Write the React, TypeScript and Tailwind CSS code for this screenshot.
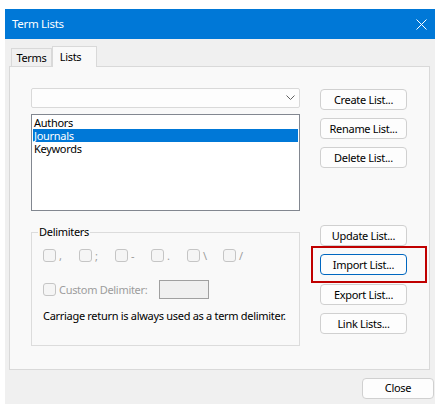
import React from "react";

const font = "font-['Noto_Sans',sans-serif] tracking-[-0.3px]";

function Btn({ label, focused = false, className = "" }: { label: string; focused?: boolean; className?: string }) {
  return (
    <div
      className={`h-[21px] w-[87px] rounded-[4px] border bg-[#fdfdfd] flex items-center justify-center text-[11px] text-black leading-none ${
        focused ? "border-[#0067c0]" : "border-[#d0d0d0]"
      } ${className}`}
    >
      {label}
    </div>
  );
}

function Check({ label, className = "" }: { label?: string; className?: string }) {
  return (
    <div className={`flex items-center ${className}`}>
      <div className="h-[13px] w-[13px] rounded-[3px] border border-[#c5c5c5] bg-[#f5f5f5]" />
      {label !== undefined && <span className="ml-[3px] text-[11px] leading-none text-[#9d9d9d]">{label}</span>}
    </div>
  );
}

export default function App() {
  return (
    <div className={`w-[435px] h-[404px] bg-white pt-[9px] pl-[5px] overflow-hidden ${font}`}>
      <div className="flex h-[395px] w-[430px] flex-col">
        {/* title bar */}
        <div className="flex h-[30px] items-center justify-between bg-[#0078d7] pl-[7px] pr-[8px]">
          <span className="text-[11.5px] text-white">Term Lists</span>
          <svg width="11" height="11" viewBox="0 0 11 11">
            <path d="M0.5 0.5 L10.5 10.5 M10.5 0.5 L0.5 10.5" stroke="white" strokeWidth="1" />
          </svg>
        </div>
        {/* body */}
        <div className="flex flex-1 flex-col bg-[#f0f0f0] pl-[4px]">
          {/* tabs */}
          <div className="mt-[7px] flex items-end pl-[2px]">
            <div className="flex h-[18px] w-[41px] items-center justify-center border border-b-0 border-[#d9d9d9] bg-[#f0f0f0] pt-[2px] text-[11px] text-black">
              Terms
            </div>
            <div className="relative z-10 -mb-[1px] flex h-[21px] w-[45px] items-start justify-center border border-b-0 border-[#d9d9d9] bg-[#f9f9f9] pt-[2px] pr-[8px] text-[11px] text-black">
              Lists
            </div>
          </div>
          {/* panel */}
          <div className="h-[304px] w-[421px] border border-[#d9d9d9] bg-[#f9f9f9] pl-[21px] pt-[21px]">
            {/* row 1 */}
            <div className="flex">
              <div className="w-[269px]">
                <div className="flex h-[20px] items-center justify-end rounded-[2px] border border-[#d9d9d9] bg-[#fdfdfd] pr-[4px]">
                  <svg width="9" height="6" viewBox="0 0 9 6">
                    <path d="M0.5 0.5 L4.5 4.5 L8.5 0.5" stroke="#606060" strokeWidth="1" fill="none" />
                  </svg>
                </div>
                <div className="mt-[6px] h-[97px] border border-[#828790] bg-white p-[1px] text-[11px] leading-[13px] text-black">
                  <div className="h-[13px] pl-[1px]">Authors</div>
                  <div className="h-[13px] bg-[#0078d7] pl-[1px] text-white">Journals</div>
                  <div className="h-[13px] pl-[1px]">Keywords</div>
                </div>
              </div>
              <div className="ml-[20px] mt-[1px] flex flex-col">
                <Btn label="Create List..." />
                <Btn label="Rename List..." className="mt-[8px]" />
                <Btn label="Delete List..." className="mt-[8px]" />
              </div>
            </div>
            {/* row 2 */}
            <div className="mt-[14px] flex">
              <fieldset className="h-[121px] w-[269px] border border-[#dcdcdc] pl-[11px] pt-[10px]">
                <legend className="-ml-[5px] px-[1px] text-[11px] leading-[14px] text-black">Delimiters</legend>
                <div className="flex">
                  <Check label="," className="w-[36px]" />
                  <Check label=";" className="w-[36px]" />
                  <Check label="-" className="w-[36px]" />
                  <Check label="." className="w-[36px]" />
                  <Check label="\" className="w-[36px]" />
                  <Check label="/" className="w-[36px]" />
                </div>
                <div className="mt-[18px] flex h-[19px] items-center">
                  <Check label="Custom Delimiter:" className="w-[116px]" />
                  <div className="h-[19px] w-[50px] border border-[#a0a0a0] bg-[#f0f0f0]" />
                </div>
                <div className="mt-[9px] whitespace-nowrap text-[11px] leading-[16px] text-black">
                  Carriage return is always used as a term delimiter.
                </div>
              </fieldset>
              <div className="ml-[20px] flex flex-col">
                <Btn label="Update List..." />
                <div className="relative mt-[8px]">
                  <Btn label="Import List..." focused />
                  <div className="pointer-events-none absolute -left-[9px] -top-[8px] -right-[20px] -bottom-[8px] border-2 border-[#c00000]" />
                </div>
                <Btn label="Export List..." className="mt-[9px]" />
                <Btn label="Link Lists..." className="mt-[8px]" />
              </div>
            </div>
          </div>
          {/* footer */}
          <div className="mt-[8px] flex justify-end pr-[1px]">
            <div className="flex h-[21px] w-[72px] items-center justify-center rounded-[4px] border border-[#d0d0d0] bg-[#fdfdfd] text-[11px] text-black">
              Close
            </div>
          </div>
        </div>
      </div>
    </div>
  );
}
